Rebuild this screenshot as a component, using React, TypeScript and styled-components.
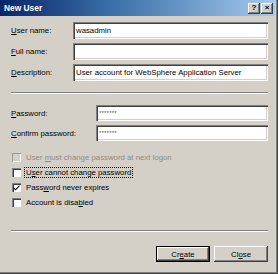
import React from "react";
import styled, { createGlobalStyle } from "styled-components";

const GlobalStyle = createGlobalStyle`
  html, body {
    margin: 0;
    padding: 0;
    background: #d4d0c8;
  }
  * {
    box-sizing: border-box;
  }
`;

const Dialog = styled.div`
  width: 278px;
  height: 274px;
  background: #d4d0c8;
  font-family: "Liberation Sans", Arial, sans-serif;
  font-size: 7.8px;
  color: #000;
  display: flex;
  flex-direction: column;
  padding: 0 3px 3px 0;
  box-shadow: inset -1px -1px #404040, inset -2px -2px #808080;
`;

const TitleBar = styled.div`
  height: 16px;
  display: flex;
  align-items: center;
  justify-content: space-between;
  padding: 0 2px 0 4px;
  background: linear-gradient(to right, #0a246a 0%, #3a6ea5 40%, #a6caf0 100%);
  color: #fff;
  font-weight: bold;
  font-size: 8.4px;
`;

const TitleButtons = styled.div`
  display: flex;
  gap: 1px;
`;

const TitleButton = styled.div`
  width: 12px;
  height: 11px;
  background: #d4d0c8;
  box-shadow: inset -1px -1px #404040, inset 1px 1px #fff, inset -2px -2px #808080;
  display: flex;
  align-items: center;
  justify-content: center;
  color: #000;
  font-size: 8px;
  font-weight: bold;
  line-height: 1;
`;

const Body = styled.div`
  flex: 1;
  display: flex;
  flex-direction: column;
  padding: 6px 7px 0 11px;
`;

const FieldGroup = styled.div<{ $gap: number }>`
  display: flex;
  flex-direction: column;
  gap: ${(p) => p.$gap}px;
`;

const FieldRow = styled.div<{ $label: number; $h: number }>`
  display: grid;
  grid-template-columns: ${(p) => p.$label}px 1fr;
  align-items: center;
  height: ${(p) => p.$h}px;
`;

const Label = styled.span`
  white-space: nowrap;
`;

const TextBox = styled.div<{ $mask?: boolean }>`
  height: 100%;
  background: #fff;
  box-shadow: inset 1px 1px #808080, inset 2px 2px #404040, inset -1px -1px #fff, inset -2px -2px #d4d0c8;
  display: flex;
  align-items: center;
  padding-left: 3px;
  white-space: nowrap;
  overflow: hidden;
  font-size: ${(p) => (p.$mask ? "6px" : "7.8px")};
  color: ${(p) => (p.$mask ? "#555" : "#000")};
  letter-spacing: ${(p) => (p.$mask ? "0.2px" : "0")};
`;

const Separator = styled.div<{ $top: number; $bottom: number }>`
  height: 2px;
  margin: ${(p) => p.$top}px 0 ${(p) => p.$bottom}px 0;
  border-top: 1px solid #808080;
  border-bottom: 1px solid #fff;
`;

const CheckList = styled.div`
  display: flex;
  flex-direction: column;
  margin-top: 9px;
`;

const CheckRow = styled.div<{ $disabled?: boolean }>`
  height: 15px;
  display: flex;
  align-items: center;
  gap: 4px;
  padding-left: 1px;
  color: ${(p) => (p.$disabled ? "#8e8c86" : "#000")};
`;

const Box = styled.span<{ $disabled?: boolean }>`
  width: 9px;
  height: 9px;
  flex: none;
  background: ${(p) => (p.$disabled ? "#d4d0c8" : "#fff")};
  box-shadow: ${(p) =>
    p.$disabled
      ? "inset 1px 1px #9a9892, inset -1px -1px #fff"
      : "inset 1px 1px #808080, inset 2px 2px #404040, inset -1px -1px #fff"};
  display: flex;
  align-items: center;
  justify-content: center;
`;

const FocusText = styled.span<{ $focus?: boolean }>`
  outline: ${(p) => (p.$focus ? "1px dotted #000" : "none")};
  outline-offset: 0;
  padding: 0 1px;
`;

const ButtonBar = styled.div`
  display: flex;
  justify-content: flex-end;
  gap: 4px;
`;

const Button = styled.div<{ $default?: boolean }>`
  width: 54px;
  height: 16px;
  display: flex;
  align-items: center;
  justify-content: center;
  background: #d4d0c8;
  box-shadow: ${(p) =>
    p.$default
      ? "inset 0 0 0 1px #000, inset -2px -2px #404040, inset 2px 2px #fff, inset -3px -3px #808080"
      : "inset -1px -1px #404040, inset 1px 1px #fff, inset -2px -2px #808080"};
`;

const Key = styled.u``;

const Check = () => (
  <svg width="7" height="7" viewBox="0 0 7 7">
    <path d="M0.5 3 L2.5 5 L6.5 1 L6.5 2.6 L2.5 6.5 L0.5 4.5 Z" fill="#000" />
  </svg>
);

export default function App() {
  return (
    <Dialog>
      <GlobalStyle />
      <TitleBar>
        <span>New User</span>
        <TitleButtons>
          <TitleButton>?</TitleButton>
          <TitleButton>×</TitleButton>
        </TitleButtons>
      </TitleBar>
      <Body>
        <FieldGroup $gap={4}>
          <FieldRow $label={62} $h={17}>
            <Label>
              <Key>U</Key>ser name:
            </Label>
            <TextBox>wasadmin</TextBox>
          </FieldRow>
          <FieldRow $label={62} $h={17}>
            <Label>
              <Key>F</Key>ull name:
            </Label>
            <TextBox />
          </FieldRow>
          <FieldRow $label={62} $h={17}>
            <Label>
              <Key>D</Key>escription:
            </Label>
            <TextBox>User account for WebSphere Application Server</TextBox>
          </FieldRow>
        </FieldGroup>
        <Separator $top={11} $bottom={11} />
        <FieldGroup $gap={4}>
          <FieldRow $label={85} $h={16}>
            <Label>
              <Key>P</Key>assword:
            </Label>
            <TextBox $mask>*******</TextBox>
          </FieldRow>
          <FieldRow $label={85} $h={16}>
            <Label>
              <Key>C</Key>onfirm password:
            </Label>
            <TextBox $mask>*******</TextBox>
          </FieldRow>
        </FieldGroup>
        <CheckList>
          <CheckRow $disabled>
            <Box $disabled />
            <FocusText>
              User <Key>m</Key>ust change password at next logon
            </FocusText>
          </CheckRow>
          <CheckRow>
            <Box />
            <FocusText $focus>
              U<Key>s</Key>er cannot change password
            </FocusText>
          </CheckRow>
          <CheckRow>
            <Box>
              <Check />
            </Box>
            <FocusText>
              Pass<Key>w</Key>ord never expires
            </FocusText>
          </CheckRow>
          <CheckRow>
            <Box />
            <FocusText>
              Account is disa<Key>b</Key>led
            </FocusText>
          </CheckRow>
        </CheckList>
        <Separator $top={20} $bottom={14} />
        <ButtonBar>
          <Button $default>
            Cr<Key>e</Key>ate
          </Button>
          <Button>
            Cl<Key>o</Key>se
          </Button>
        </ButtonBar>
      </Body>
    </Dialog>
  );
}
